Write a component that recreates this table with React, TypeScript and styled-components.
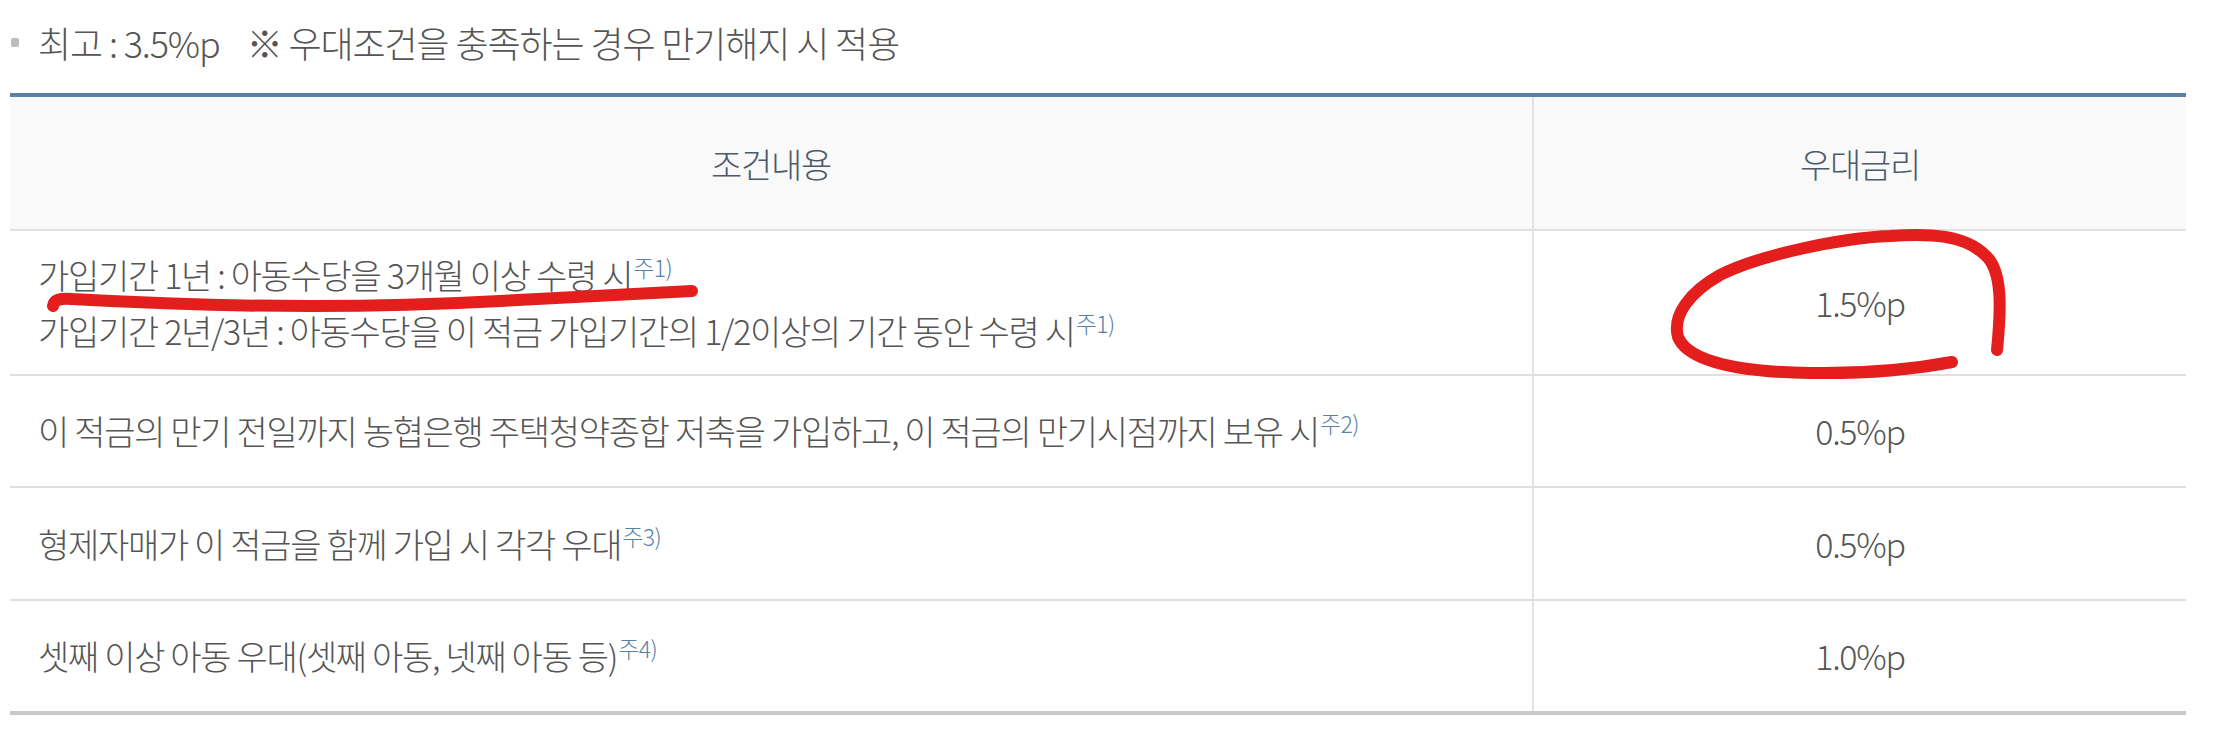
import styled, { createGlobalStyle } from "styled-components";

const GlobalStyle = createGlobalStyle`
  html, body {
    margin: 0;
    padding: 0;
    background: #fff;
  }
  body {
    font-family: "Noto Sans CJK KR", "Noto Sans", sans-serif;
    color: #555;
  }
`;

const Page = styled.div`
  position: relative;
  width: 2222px;
  height: 730px;
  padding: 0 36px 0 10px;
  box-sizing: border-box;
`;

const Note = styled.div`
  display: flex;
  align-items: center;
  gap: 19px;
  height: 93px;
  padding: 0 0 9px 1px;
  box-sizing: border-box;
  font-size: 36px;
  font-weight: 300;
  letter-spacing: -1.1px;
  color: #555;
`;

const Bullet = styled.i`
  display: block;
  width: 8px;
  height: 9px;
  border-radius: 2px;
  background: #bdbdbd;
`;

const Remark = styled.span`
  margin-left: 27px;
`;

const Table = styled.table`
  width: 100%;
  border-collapse: collapse;
  border-top: 4px solid #5781a9;
  border-bottom: 4px solid #c9c9c9;
  font-size: 34px;
  font-weight: 300;
  letter-spacing: -1.3px;
`;

const Th = styled.th<{ $w?: number }>`
  width: ${(p) => (p.$w ? `${p.$w}px` : "auto")};
  height: 132px;
  padding: 0;
  background: #f9f9f9;
  color: #4c5b6b;
  font-weight: 300;
  text-align: center;
  border-bottom: 2px solid #e0e0e0;
  & + & {
    border-left: 2px solid #e2e2e2;
  }
`;

const Td = styled.td<{ $h: number; $center?: boolean }>`
  height: ${(p) => p.$h}px;
  padding: 0 0 0 ${(p) => (p.$center ? 0 : 28)}px;
  text-align: ${(p) => (p.$center ? "center" : "left")};
  vertical-align: middle;
  line-height: 56px;
  color: #555;
  border-bottom: 2px solid #e0e0e0;
  & + & {
    border-left: 2px solid #e2e2e2;
  }
`;

const Note1 = styled.sup`
  font-size: 23px;
  line-height: 0;
  letter-spacing: -0.6px;
  color: #5a82a8;
  margin-left: 1px;
  vertical-align: 12px;
`;

const Marks = styled.svg`
  position: absolute;
  left: 0;
  top: 0;
  pointer-events: none;
`;

type Row = { lines: string[]; note: string; rate: string; h: number };

const rows: Row[] = [
  {
    lines: [
      "가입기간 1년 : 아동수당을 3개월 이상 수령 시",
      "가입기간 2년/3년 : 아동수당을 이 적금 가입기간의 1/2이상의 기간 동안 수령 시",
    ],
    note: "주1)",
    rate: "1.5%p",
    h: 143,
  },
  {
    lines: ["이 적금의 만기 전일까지 농협은행 주택청약종합 저축을 가입하고, 이 적금의 만기시점까지 보유 시"],
    note: "주2)",
    rate: "0.5%p",
    h: 110,
  },
  {
    lines: ["형제자매가 이 적금을 함께 가입 시 각각 우대"],
    note: "주3)",
    rate: "0.5%p",
    h: 111,
  },
  {
    lines: ["셋째 이상 아동 우대(셋째 아동, 넷째 아동 등)"],
    note: "주4)",
    rate: "1.0%p",
    h: 110,
  },
];

export default function App() {
  return (
    <>
      <GlobalStyle />
      <Page>
        <Note>
          <Bullet />
          <span>
            최고 : 3.5%p<Remark>※ 우대조건을 충족하는 경우 만기해지 시 적용</Remark>
          </span>
        </Note>
        <Table>
          <thead>
            <tr>
              <Th>조건내용</Th>
              <Th $w={652}>우대금리</Th>
            </tr>
          </thead>
          <tbody>
            {rows.map((r) => (
              <tr key={r.rate + r.note}>
                <Td $h={r.h}>
                  {r.lines.map((l, i) => (
                    <div key={i}>
                      {l}
                      <Note1>{r.note}</Note1>
                    </div>
                  ))}
                </Td>
                <Td $h={r.h} $center>
                  {r.rate}
                </Td>
              </tr>
            ))}
          </tbody>
        </Table>
        <Marks width="2222" height="730" viewBox="0 0 2222 730">
          <g fill="none" stroke="#e41d1d" strokeWidth="12" strokeLinecap="round" strokeLinejoin="round">
            <path d="M 53 306 Q 54 297 72 299 Q 300 312 500 301 Q 610 295 692 291" />
            <path d="M 1997 350 C 2001 310, 2003 270, 1985 255 C 1965 235, 1930 233, 1890 236 C 1840 238, 1760 255, 1720 275 C 1690 292, 1672 315, 1678 337 C 1688 362, 1740 372, 1810 373 C 1870 374, 1920 368, 1952 362" />
          </g>
        </Marks>
      </Page>
    </>
  );
}
